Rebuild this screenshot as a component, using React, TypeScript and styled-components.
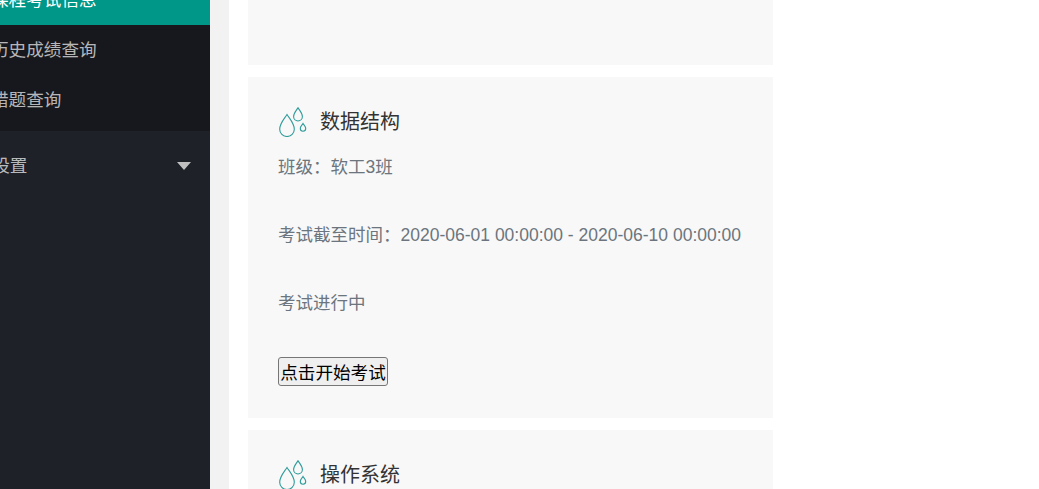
import React from "react";
import styled, { createGlobalStyle } from "styled-components";

const GlobalStyle = createGlobalStyle`
  html, body {
    margin: 0;
    padding: 0;
    height: 100%;
    overflow: hidden;
    background: #fff;
    font-family: "Liberation Sans", "Noto Sans CJK SC", sans-serif;
  }
`;

// the reference is a page scrolled 25px down and 50px right
const Shell = styled.div`
  display: flex;
  width: 1089px;
  height: 514px;
  margin: -25px 0 0 -50px;
  overflow: hidden;
`;

const Sidebar = styled.nav`
  flex: 0 0 260px;
  background: #1e2128;
  font-size: 17.6px;
`;

const NavItem = styled.a<{ $active?: boolean }>`
  display: block;
  height: 50px;
  padding-left: 41px;
  line-height: 50px;
  color: ${(props) => (props.$active ? "#fff" : "rgba(255, 255, 255, 0.7)")};
  background: ${(props) => (props.$active ? "#009688" : "transparent")};
`;

const SubNav = styled.div`
  padding-bottom: 6px;
  background: #17181d;
`;

const GroupItem = styled(NavItem)`
  display: flex;
  align-items: center;
  justify-content: space-between;
  margin-top: 10px;
  padding-left: 7px;
  padding-right: 19px;
`;

const Caret = styled.span`
  width: 0;
  height: 0;
  border-style: solid;
  border-width: 8px 7.5px 0;
  border-color: #c0c0c0 transparent transparent;
`;

const Gutter = styled.div`
  flex: 0 0 19px;
  background: #f2f2f2;
`;

const Main = styled.main`
  flex: 1;
  display: flex;
  flex-direction: column;
  gap: 12px;
  padding: 0 0 0 19px;
  background: #fff;
`;

const Card = styled.section`
  flex-shrink: 0;
  width: 525px;
  box-sizing: border-box;
  padding: 30px 30px 32px;
  background: #f8f8f8;
`;

const BlankCard = styled(Card)`
  height: 90px;
  padding: 0;
`;

const CardTitle = styled.h3`
  display: flex;
  align-items: center;
  height: 30px;
  margin: 0 0 17px;
  padding-left: 1px;
  font-size: 20px;
  font-weight: 400;
  color: #333;
`;

const TitleText = styled.span`
  margin-left: 13px;
  padding-bottom: 4px;
`;

const InfoLine = styled.p`
  margin: 0 0 42px;
  font-size: 17.5px;
  line-height: 26px;
  color: #6c757d;
  white-space: nowrap;
`;

const StartButton = styled.button`
  display: block;
  height: 29px;
  margin-top: -1px;
  padding: 0;
  width: 110px;
  border: 1px solid #767676;
  border-radius: 3px;
  background: #efefef;
  font-family: inherit;
  font-size: 17.6px;
  color: #000;
`;

const DropsIcon = () => (
  <svg width="28" height="30" viewBox="0 0 28 30" fill="none" stroke="#2f9c9a" strokeWidth="1.1">
    <path d="M8 7.5C5.5 11.5 0.7 16.5 0.7 22.2a7.3 7.3 0 0 0 14.6 0C15.3 16.5 10.5 11.5 8 7.5Z" />
    <path d="M19 0.7C17.6 3.2 14.6 6 14.6 9.6a4.4 4.4 0 0 0 8.8 0C23.4 6 20.4 3.2 19 0.7Z" />
    <path d="M24 16.5C23.2 18 21.3 19.5 21.3 21.6a2.7 2.7 0 0 0 5.4 0C26.7 19.5 24.8 18 24 16.5Z" />
  </svg>
);

export default function App() {
  return (
    <>
      <GlobalStyle />
      <Shell>
        <Sidebar>
          <NavItem $active>课程考试信息</NavItem>
          <SubNav>
            <NavItem>历史成绩查询</NavItem>
            <NavItem>错题查询</NavItem>
          </SubNav>
          <GroupItem>
            个人设置
            <Caret />
          </GroupItem>
        </Sidebar>
        <Gutter />
        <Main>
          <BlankCard />
          <Card>
            <CardTitle>
              <DropsIcon />
              <TitleText>数据结构</TitleText>
            </CardTitle>
            <InfoLine>班级：软工3班</InfoLine>
            <InfoLine>考试截至时间：2020-06-01 00:00:00 - 2020-06-10 00:00:00</InfoLine>
            <InfoLine>考试进行中</InfoLine>
            <StartButton>点击开始考试</StartButton>
          </Card>
          <Card>
            <CardTitle>
              <DropsIcon />
              <TitleText>操作系统</TitleText>
            </CardTitle>
          </Card>
        </Main>
      </Shell>
    </>
  );
}
